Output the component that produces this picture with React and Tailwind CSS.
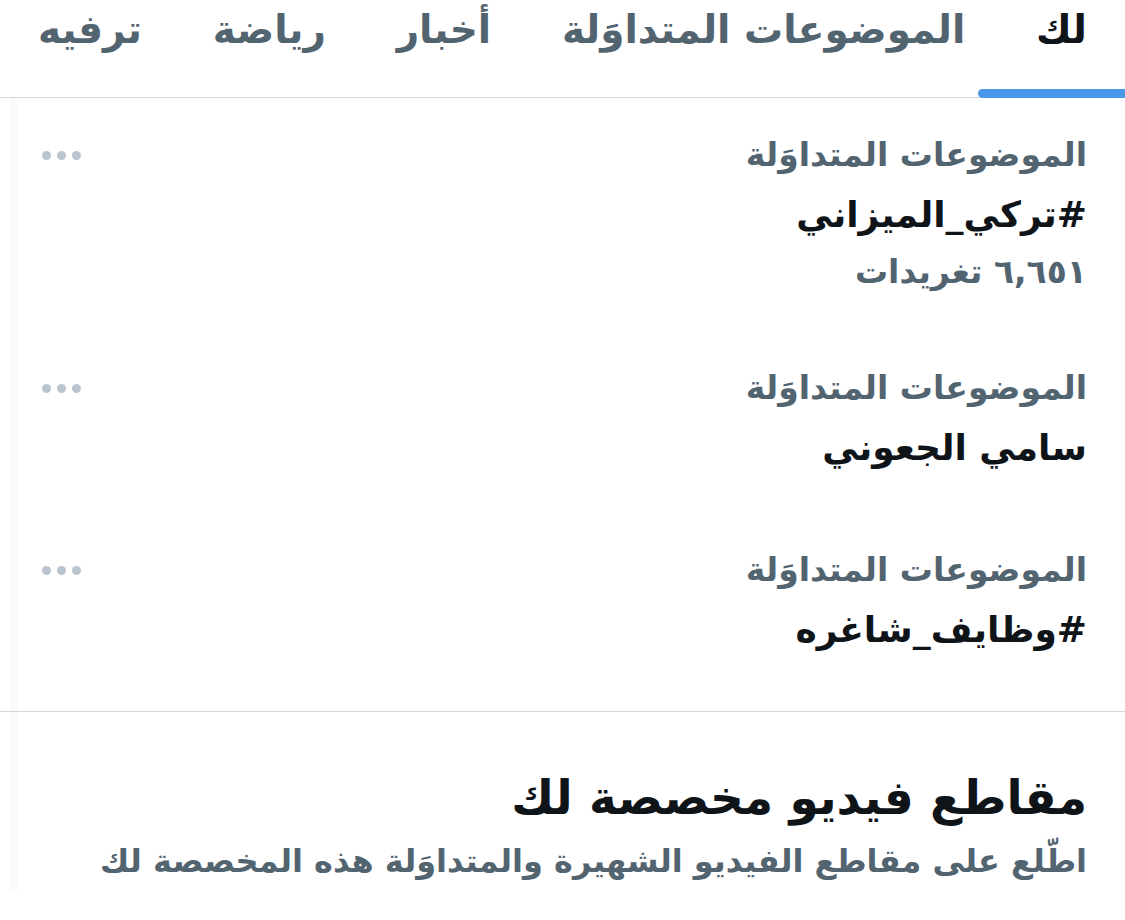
export default function App() {
  const trends = [
    { label: "الموضوعات المتداوَلة", title: "#تركي_الميزاني", count: "٦,٦٥١ تغريدات" },
    { label: "الموضوعات المتداوَلة", title: "سامي الجعوني" },
    { label: "الموضوعات المتداوَلة", title: "#وظايف_شاغره" },
  ];
  const tabs = ["لك", "الموضوعات المتداوَلة", "أخبار", "رياضة", "ترفيه"];

  return (
    <div
      dir="rtl"
      className="w-[1125px] h-[920px] bg-white overflow-hidden relative"
      style={{ fontFamily: '"DejaVu Sans", "Noto Sans", sans-serif' }}
    >
      {/* Tabs */}
      <div className="relative h-[98px] border-b border-[#d4d7da]">
        <div className="flex justify-between items-start px-[38px] pt-[2px]">
          {tabs.map((t, i) => (
            <span
              key={t}
              className={`text-[39px] font-bold leading-[56px] ${i === 0 ? "text-[#0f1419]" : "text-[#536471]"}`}
            >
              {t}
            </span>
          ))}
        </div>
        <div className="absolute bottom-[-1px] right-[-20px] w-[167px] h-[9px] rounded-full bg-[#4a99e9]" />
      </div>

      <div className="border-l-[7px] border-[#fafafa] ml-[10px]">
        {/* Trends */}
        <div className="pt-[35px] pb-[53px]">
          {trends.map((tr, i) => (
            <div key={i} className={`flex justify-between pr-[38px] pl-[25px] ${i > 0 ? "mt-[72px]" : ""}`}>
              <div className="flex flex-col">
                <span className="text-[33px] font-bold text-[#536471] leading-[44px]">{tr.label}</span>
                <span className="text-[36px] font-bold text-[#0f1419] leading-[56px] mt-[10px]">{tr.title}</span>
                {tr.count && (
                  <span className="text-[33px] font-bold text-[#536471] leading-[44px] mt-[7px]">{tr.count}</span>
                )}
              </div>
              <div className="flex gap-[6px] pt-[18px]">
                <span className="w-[9px] h-[9px] rounded-full bg-[#bac4ce]" />
                <span className="w-[9px] h-[9px] rounded-full bg-[#bac4ce]" />
                <span className="w-[9px] h-[9px] rounded-full bg-[#bac4ce]" />
              </div>
            </div>
          ))}
        </div>
      </div>

      <div className="border-t border-[#d4d7da]">
        <div className="border-l-[7px] border-[#fafafa] ml-[10px] pt-[54px] pb-[6px] pr-[38px]">
          <div className="text-[47px] font-bold text-[#0f1419] leading-[64px]">مقاطع فيديو مخصصة لك</div>
          <div className="text-[32px] font-bold text-[#536471] leading-[46px] mt-[8px]">
            اطّلع على مقاطع الفيديو الشهيرة والمتداوَلة هذه المخصصة لك
          </div>
        </div>
      </div>
    </div>
  );
}
